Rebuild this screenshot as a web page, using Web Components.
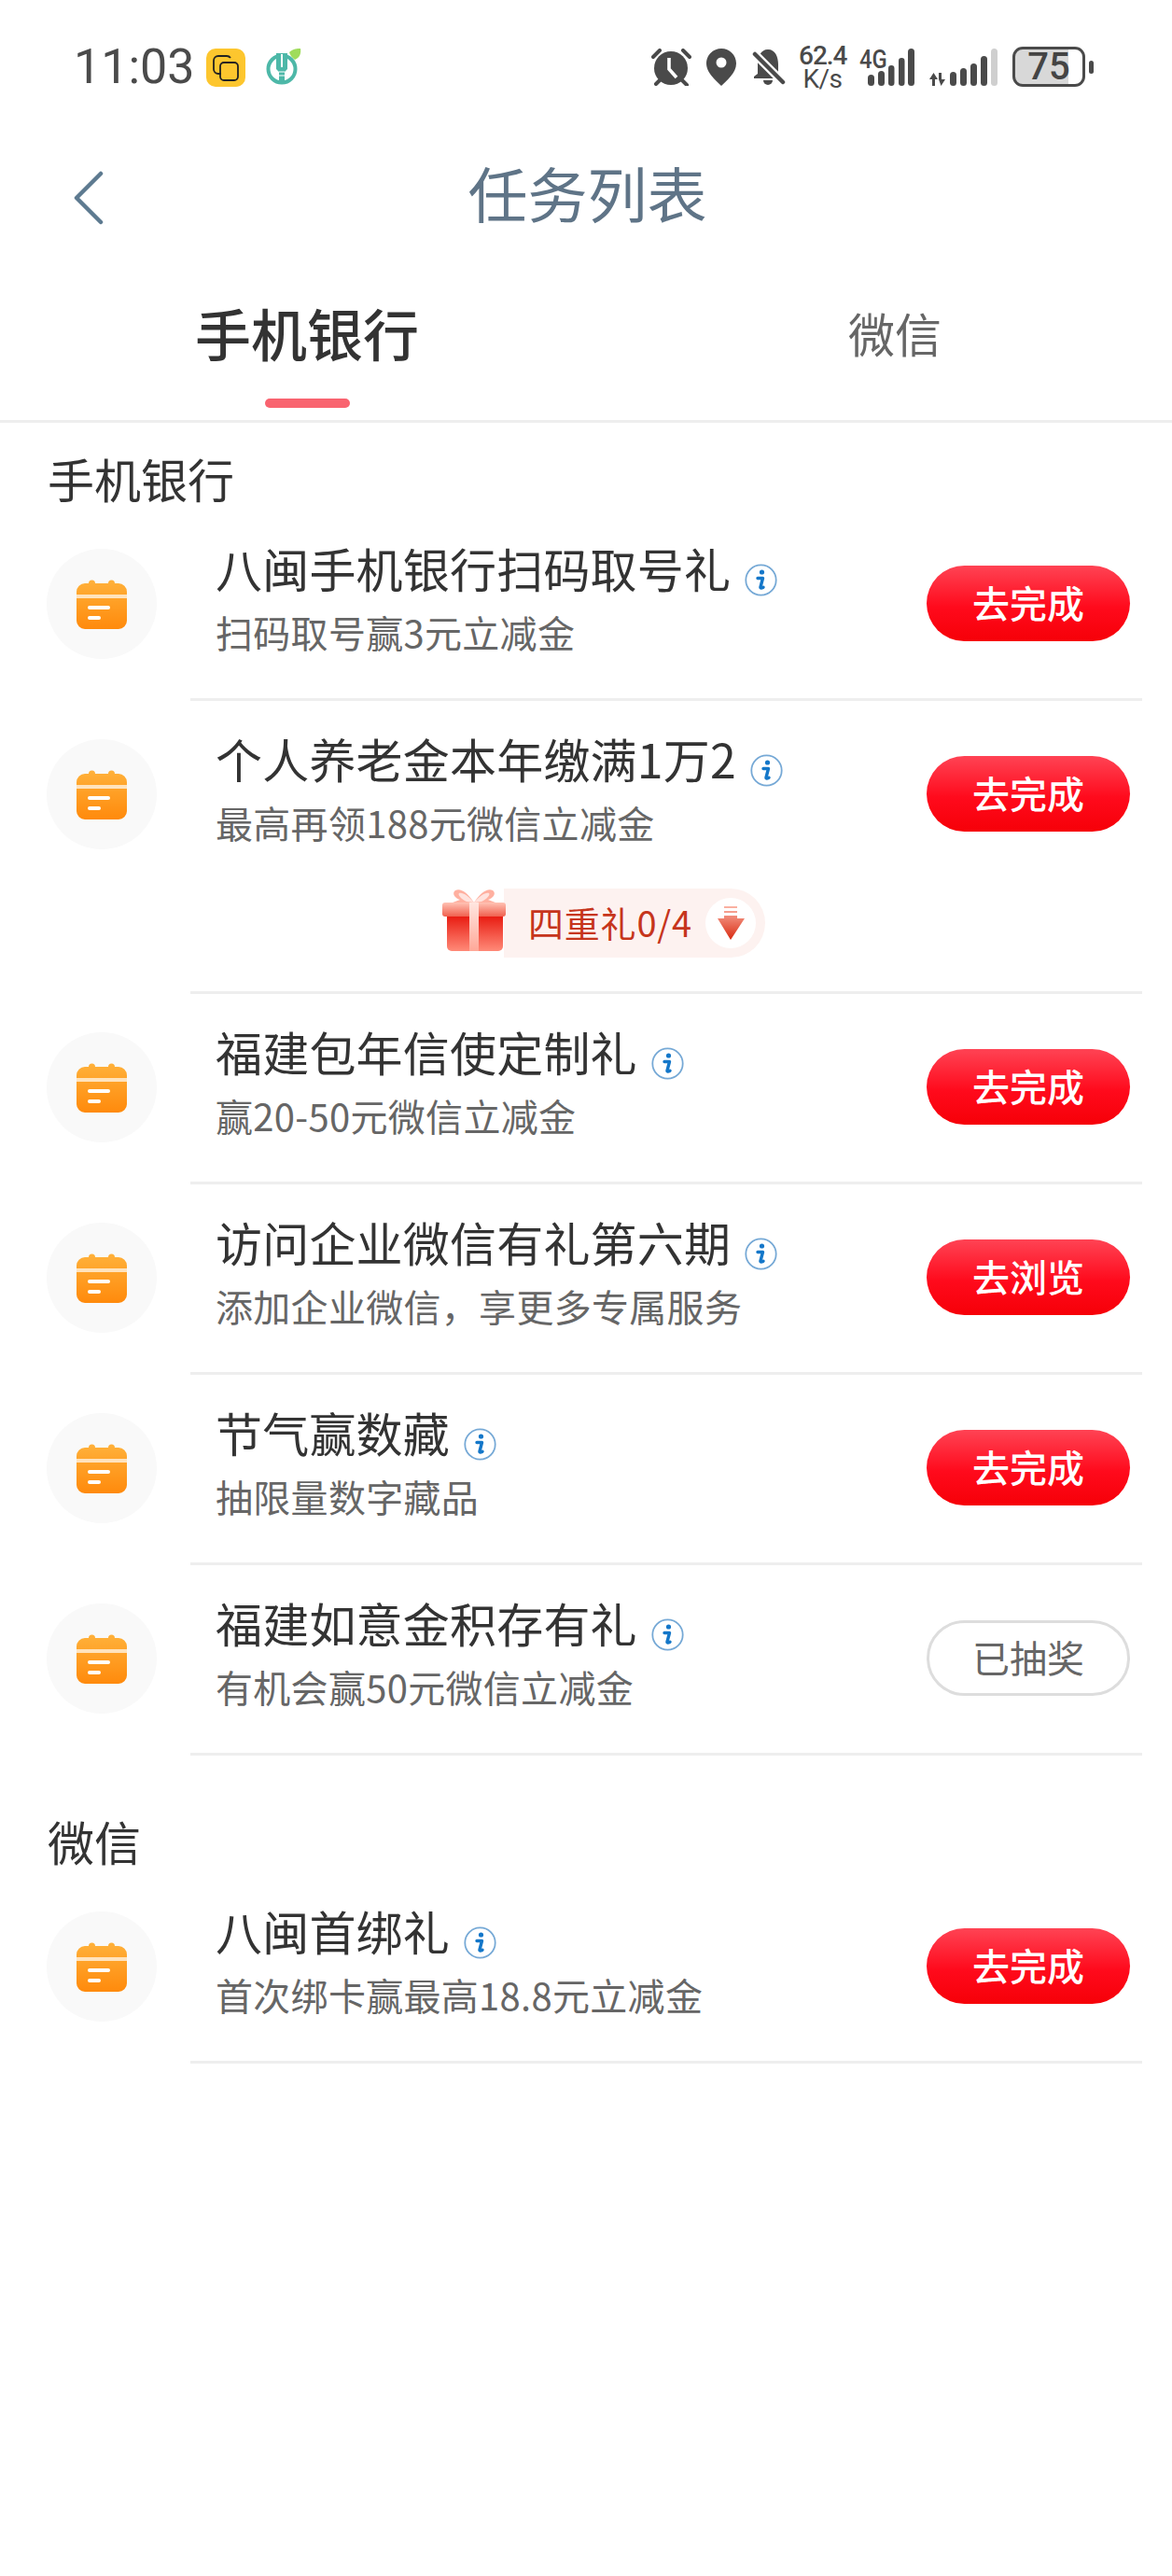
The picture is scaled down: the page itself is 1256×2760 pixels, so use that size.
<!DOCTYPE html>
<html lang="zh-CN"><head><meta charset="utf-8"><title>任务列表</title>
<style>html,body{margin:0;padding:0;background:#fff;font-family:"Noto Sans CJK SC","Noto Sans",sans-serif}</style></head>
<body>
<app-page>
  <status-bar></status-bar>
  <nav-header>任务列表</nav-header>
  <tab-bar></tab-bar>
  <section-title>手机银行</section-title>
  <task-row><span slot="title">八闽手机银行扫码取号礼</span><span slot="sub">扫码取号赢3元立减金</span><task-btn>去完成</task-btn></task-row>
  <task-row><span slot="title">个人养老金本年缴满1万2</span><span slot="sub">最高再领188元微信立减金</span><task-btn>去完成</task-btn><gift-pill slot="extra">四重礼0/4</gift-pill></task-row>
  <task-row><span slot="title">福建包年信使定制礼</span><span slot="sub">赢20-50元微信立减金</span><task-btn>去完成</task-btn></task-row>
  <task-row><span slot="title">访问企业微信有礼第六期</span><span slot="sub">添加企业微信，享更多专属服务</span><task-btn>去浏览</task-btn></task-row>
  <task-row><span slot="title">节气赢数藏</span><span slot="sub">抽限量数字藏品</span><task-btn>去完成</task-btn></task-row>
  <task-row><span slot="title">福建如意金积存有礼</span><span slot="sub">有机会赢50元微信立减金</span><task-btn done>已抽奖</task-btn></task-row>
  <section-title spaced>微信</section-title>
  <task-row><span slot="title">八闽首绑礼</span><span slot="sub">首次绑卡赢最高18.8元立减金</span><task-btn>去完成</task-btn></task-row>
</app-page>
<script>
const def=(name,html)=>customElements.define(name,class extends HTMLElement{
  constructor(){super();this.attachShadow({mode:'open'}).innerHTML=html;}
});
def('app-page',`<style>:host{display:block;width:1256px;min-height:2760px;background:#fff;font-family:"Noto Sans CJK SC","Noto Sans",sans-serif}</style><slot></slot>`);
def('status-bar',`<style>
:host{display:flex;box-sizing:border-box;height:144px;padding:50px 84px 0 79px;align-items:flex-start;color:#4a4a4a;font-family:Roboto,sans-serif}
svg{display:block;flex:none}
.time{font-size:52px;line-height:44px;width:142px;flex:none}
.apps{display:flex;gap:22px;margin-top:2px}
.right{display:flex;margin-left:auto;align-items:flex-start}
.speed{width:51px;margin:-3px 14px 0;text-align:center;font-size:28px;line-height:25px;height:46px;font-weight:500;letter-spacing:-1px;flex:none}
.speed b{display:block;font-weight:400;letter-spacing:-.6px}
.sig{position:relative;width:59px;height:40px;margin-top:2px;flex:none}
.sig span{position:absolute;left:0;top:-3px;font-size:27px;line-height:30px;font-weight:500;transform:scaleX(.88);transform-origin:left center}
.batt{display:flex;align-items:center;justify-content:center;box-sizing:border-box;width:78px;height:43px;margin-left:16px;border:3.6px solid #4a4a4a;border-radius:11px;background:linear-gradient(90deg,#d8d8d8 0 57px,#fff 57px);font-size:40px;line-height:36px;font-weight:500;color:#444;flex:none}
.nub{width:5px;height:14px;border-radius:2.5px;background:#4a4a4a;margin:15px 0 0 4px;flex:none}
</style>
<div class="time">11:03</div>
<div class="apps">
<svg width="42" height="41" viewBox="0 0 42 41"><rect width="42" height="41" rx="10" fill="#fdc62e"/><path d="M16 27h-3a5 5 0 0 1-5-5V13a5 5 0 0 1 5-5h9a5 5 0 0 1 4 2" fill="none" stroke="#222" stroke-width="1.8"/><rect x="15" y="15" width="19" height="19" rx="4" fill="none" stroke="#222" stroke-width="1.8"/></svg>
<svg width="38" height="41" viewBox="0 0 38 41"><circle cx="17" cy="22" r="14.500" fill="none" stroke="#4db8a8" stroke-width="4"/><path d="M11 5h12v17l-3 3v12h-6V25l-3-3z" fill="#4db8a8"/><path d="M16 6h2v14h-2z" fill="#fff"/><path d="M14 25h6M14 29h6" stroke="#fff" stroke-width="1.2"/><path d="M25 4C29 0 34 0 37 0c1 5-1 10-6 12-3-2-5-5-6-8z" fill="#9fdc5c"/></svg>
</div>
<div class="right">
<svg style="margin-top:2px" width="43" height="40" viewBox="0 0 43 40"><circle cx="21" cy="21" r="18" fill="#4a4a4a"/><path d="M2 9 9 2M34 2l7 7M5 38l4-4M33 34l5 5" stroke="#4a4a4a" stroke-width="4" stroke-linecap="round"/><path d="M19 10v12l8 9" fill="none" stroke="#fff" stroke-width="3.600"/></svg>
<svg style="margin:2px 0 0 16px" width="32" height="40" viewBox="0 0 32 40"><path d="M16 0C7 0 0 7 0 16c0 10 10 18 16 24 6-6 16-14 16-24C32 7 25 0 16 0Z" fill="#4a4a4a"/><circle cx="16" cy="15" r="5.500" fill="#fff"/></svg>
<svg style="margin:2px 0 0 17px" width="36" height="40" viewBox="0 0 36 40"><path d="M17 1C9 1 6 9 6 17v10l-4 3v2h27l-1-5V17C28 9 25 1 17 1Z" fill="#4a4a4a"/><path d="M12 34a5 5 0 0 0 10 0z" fill="#4a4a4a"/><path d="M2 5l32 32" stroke="#fff" stroke-width="9"/><path d="M3 6l30 30" stroke="#4a4a4a" stroke-width="4.500" stroke-linecap="round"/></svg>
<div class="speed">62.4<b>K/s</b></div>
<div class="sig"><svg width="59" height="40" viewBox="0 0 59 40"><g fill="#4a4a4a"><rect x="9" y="28" width="7" height="12" rx="3.500"/><rect x="20" y="24" width="7" height="16" rx="3.500"/><rect x="31" y="18" width="6.500" height="22" rx="3.200"/><rect x="42" y="10" width="6.500" height="30" rx="3.200"/><rect x="52" y="0" width="7" height="40" rx="3.500"/></g></svg><span>4G</span></div>
<svg style="margin:2px 0 0 16px" width="73" height="40" viewBox="0 0 73 40"><g fill="#4a4a4a"><path d="M0 33l4.500-7 4.500 7H6v7H3v-7zM10 26h3v7h4l-4.500 7L10 33z"/><rect x="22" y="25" width="7" height="15" rx="3.500"/><rect x="33" y="21" width="7" height="19" rx="3.500"/><rect x="44" y="16" width="7" height="24" rx="3.500"/><rect x="55" y="8" width="7" height="32" rx="3.500"/></g><rect x="66" y="0" width="7" height="40" rx="3.500" fill="#cfcfcf"/></svg>
<div class="batt">75</div><div class="nub"></div>
</div>`);
def('nav-header',`<style>
:host{display:block;position:relative;height:126px}
.bar{display:flex;align-items:center;justify-content:center;box-sizing:border-box;height:126px;padding:0 0 5px 3px;font-size:64px;color:#5f7487;line-height:76px}
svg{position:absolute;left:78px;top:39px}
</style><svg width="34" height="58" viewBox="0 0 34 58"><path d="M30 3 4 29l26 26" fill="none" stroke="#5d7a90" stroke-width="4.500" stroke-linecap="round" stroke-linejoin="round"/></svg><div class="bar"><slot></slot></div>`);
def('tab-bar',`<style>
:host{display:grid;grid-template-columns:658px 598px;box-sizing:border-box;height:183px;padding-top:51px;border-bottom:3px solid #eee;text-align:center}
.t{line-height:70px}
.a{font-size:60px;font-weight:500;color:#333}
.b{font-size:50px;color:#666;padding-left:4px}
i{display:block;width:91px;height:10px;border-radius:5px;background:#f9636f;margin:36px auto 0}
</style><div><div class="t a">手机银行</div><i></i></div><div class="t b">微信</div>`);
def('section-title',`<style>
:host{display:block;box-sizing:border-box;height:94px;padding:28px 0 0 51px;font-size:50px;line-height:62px;color:#333}
:host([spaced]){height:126px;padding-top:60px}
</style><slot></slot>`);
def('cal-icon',`<style>
:host{display:flex;align-items:center;justify-content:center;width:118px;height:118px;border-radius:50%;background:#f9f9f9;flex:none;margin-top:41px}
svg{display:block}
</style><svg width="54" height="54" viewBox="0 0 54 54"><defs><linearGradient id="g" x1="0" y1="0" x2="0" y2="1"><stop offset="0" stop-color="#ffb13a"/><stop offset="1" stop-color="#ff8a0c"/></linearGradient></defs><path d="M9 5h4a3.500 3.500 0 0 1 7 0h14a3.500 3.500 0 0 1 7 0h4a9 9 0 0 1 9 9v31a9 9 0 0 1-9 9H9a9 9 0 0 1-9-9V14a9 9 0 0 1 9-9z" fill="url(#g)"/><path d="M0 19h54" stroke="#ffe3bd" stroke-width="4"/><rect x="12" y="29" width="24" height="4" rx="2" fill="#fff"/><rect x="12" y="40" width="14" height="4" rx="2" fill="#fff"/></svg>`);
def('info-icon',`<style>:host{display:block;flex:none;width:35px;height:35px;margin:26px 0 0 15px}svg{display:block}</style><svg width="35" height="35" viewBox="0 0 35 35"><circle cx="17.500" cy="17.500" r="16.200" fill="#fff" stroke="#76a9d6" stroke-width="1.800"/><circle cx="18.500" cy="9" r="2.600" fill="#1477c9"/><path d="M14 15.500h5.500L17 25c-.3 1.300.8 1.500 3 .2" fill="none" stroke="#1477c9" stroke-width="3.400" stroke-linecap="round" stroke-linejoin="round"/></svg>`);
def('task-btn',`<style>
:host{display:flex;box-sizing:border-box;align-items:center;justify-content:center;flex:none;width:218px;height:81px;padding-bottom:4px;border-radius:41px;background:linear-gradient(#ff4354,#ff0a1c 55%,#f60008);color:#fff;font-size:40px;font-weight:500;line-height:1;margin:-2px 13px 0 auto;align-self:center}
:host([done]){background:#fff;border:3px solid #ddd;color:#666;font-weight:400}
</style><slot></slot>`);
def('task-row',`<style>
:host{display:flex;padding-left:50px}
.body{flex:none;width:1020px;margin-left:36px;border-bottom:3px solid #eee;box-sizing:border-box}
.main{display:flex;height:201px;padding-left:27px;box-sizing:border-box}
.txt{padding-top:31px}
.ttl{display:flex;font-size:50px;line-height:60px;letter-spacing:.2px;color:#333;white-space:nowrap}
.sub{font-size:40px;line-height:56px;letter-spacing:.3px;color:#666;margin-top:10px;white-space:nowrap}
::slotted([slot=extra]){margin:0 0 36px 269px}
</style><cal-icon></cal-icon><div class="body"><div class="main"><div class="txt"><div class="ttl"><slot name="title"></slot><info-icon></info-icon></div><div class="sub"><slot name="sub"></slot></div></div><slot></slot></div><slot name="extra"></slot></div>`);
def('gift-pill',`<style>
:host{display:flex;width:347px;height:74px;align-items:flex-start}
svg{display:block;flex:none}
.p{display:flex;align-items:center;box-sizing:border-box;width:280px;height:74px;margin-left:-3px;padding:0 0 3px 26px;border-radius:0 37px 37px 0;background:#fdf2f0;color:#c6351c;font-size:38px;letter-spacing:.8px;line-height:1;white-space:nowrap}
.arrow{margin:3px 10px 0 auto}
</style>
<svg width="70" height="67" viewBox="0 0 70 67" style="position:relative;z-index:1"><defs><linearGradient id="b" x1="0" y1="0" x2="0" y2="1"><stop offset="0" stop-color="#e81a10"/><stop offset="1" stop-color="#ff8a78"/></linearGradient><linearGradient id="l" x1="0" y1="0" x2="0" y2="1"><stop offset="0" stop-color="#ffc2b4"/><stop offset="1" stop-color="#f0604e"/></linearGradient><linearGradient id="r" x1="0" y1="0" x2="0" y2="1"><stop offset="0" stop-color="#ffe6e0"/><stop offset="1" stop-color="#ffa898"/></linearGradient></defs>
<path d="M35 15C28 4 20-1 15 2c-4 3-1 8 5 10L12 15zM35 15C42 4 50-1 55 2c4 3 1 8-5 10l8 3z" fill="#ffb0a0"/><path d="M35 15C29 8 23 4 19 5c-2 2 3 7 8 9zM35 15c6-7 12-11 16-10 2 2-3 7-8 9z" fill="#fff" opacity=".65"/>
<path d="M6 29h60v33a5 5 0 0 1-5 5H11a5 5 0 0 1-5-5z" fill="url(#b)"/><rect x="1" y="15" width="68" height="15" rx="3" fill="url(#l)"/><rect x="30" y="15" width="10" height="52" fill="url(#r)"/></svg>
<div class="p"><slot></slot><svg class="arrow" width="54" height="54" viewBox="0 0 54 54"><defs><linearGradient id="a" x1="0" y1="0" x2="0" y2="1"><stop offset="0" stop-color="#fbb4a6"/><stop offset="1" stop-color="#d92a10"/></linearGradient></defs><circle cx="27" cy="27" r="27" fill="#fff"/><path d="M20 9h14v2H20zM20 14h14v2H20zM20 19h14v3h8L27 45 13 22h7z" fill="url(#a)"/></svg></div>`);
</script>
</body></html>
